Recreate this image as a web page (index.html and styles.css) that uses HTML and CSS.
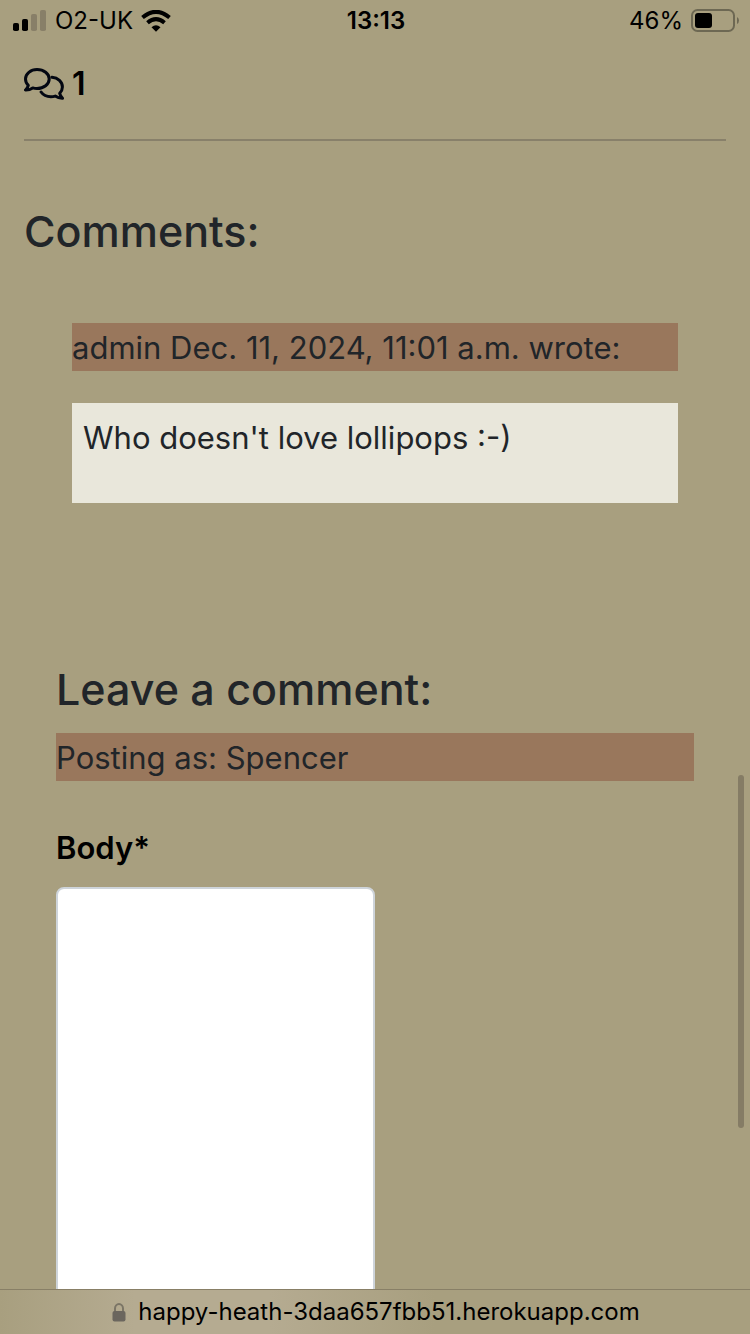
FILE: index.html
```html
<!DOCTYPE html>
<html lang="en">
<head>
<meta charset="utf-8">
<meta name="viewport" content="width=device-width, initial-scale=1">
<title>Comments</title>
<link rel="stylesheet" href="styles.css">
</head>
<body>
<header class="status">
  <div class="status-side">
    <svg class="signal" width="34" height="22" viewBox="0 0 34 22" aria-hidden="true">
      <rect x="0" y="13" width="6" height="8" rx="1.8"/>
      <rect x="9" y="9" width="6" height="12" rx="1.8"/>
      <rect class="dim" x="18" y="4" width="6" height="17" rx="1.8"/>
      <rect class="dim" x="27" y="0" width="6" height="21" rx="1.8"/>
    </svg>
    <span>O2-UK</span>
    <svg width="30" height="22" viewBox="0 0 30 22" aria-hidden="true">
      <path class="wave" d="M1.500 7.600Q15-4 28.500 7.600"/>
      <path class="wave" d="M6.500 12.700Q15 5.400 23.500 12.700"/>
      <path d="M10.500 17.200Q15 13.200 19.500 17.200L15 21.800z"/>
    </svg>
  </div>
  <time class="clock">13:13</time>
  <div class="status-side status-end">
    <span>46%</span>
    <svg width="48" height="24" viewBox="0 0 48 24" aria-hidden="true">
      <rect class="shell" x="1" y="1" width="42" height="21" rx="5.500"/>
      <rect x="4" y="4" width="17" height="15" rx="3"/>
      <path class="cap" d="M46 8q2 1.200 2 3.500t-2 3.500z"/>
    </svg>
  </div>
</header>

<main class="page">
  <div class="count">
    <svg width="40" height="32" viewBox="0 0 40 32" aria-hidden="true">
      <path d="M13 1.500C6.600 1.500 1.500 5.800 1.500 11c0 2.500 1 4.700 2.800 6.400-.4 1.800-1.400 3.300-2.800 4.600 2.800.1 5.200-.7 7.200-2.100 1.400.5 2.800.7 4.300.7 6.800 0 12.200-4.300 12.200-9.600S19.800 1.500 13 1.500z"/>
      <path d="M28 9.300c6 .4 10.400 4.600 10.400 9.700 0 2.400-1 4.600-2.700 6.300.4 1.800 1.400 3.500 2.800 5-2.900.1-5.300-.8-7.300-2.200-1.400.4-2.800.6-4.300.6-4.200 0-7.900-1.900-9.800-4.700"/>
    </svg>
    <span>1</span>
  </div>
  <hr class="rule">
  <h3 class="title">Comments:</h3>
  <article class="comment">
    <p class="band">admin Dec. 11, 2024, 11:01 a.m. wrote:</p>
    <p class="comment-text">Who doesn't love lollipops :-)</p>
  </article>
  <form class="form">
    <h3 class="title">Leave a comment:</h3>
    <p class="band">Posting as: Spencer</p>
    <label class="label" for="body">Body*</label>
    <textarea class="field" id="body" name="body"></textarea>
  </form>
  <div class="thumb"></div>
</main>

<footer class="address">
  <svg width="14" height="19" viewBox="0 0 14 19" aria-hidden="true">
    <path class="shackle" d="M3 9V5.500a4 4.500 0 0 1 8 0V9"/>
    <rect x="0.500" y="8" width="13" height="10.500" rx="2"/>
  </svg>
  <span>happy-heath-3daa657fbb51.herokuapp.com</span>
</footer>
</body>
</html>
```
FILE: styles.css
```css
* { box-sizing: border-box; }

body {
  margin: 0;
  height: 100vh;
  display: flex;
  flex-direction: column;
  overflow: hidden;
  background: #a89f7f;
  color: #212529;
  font-family: Inter, "Liberation Sans", sans-serif;
  font-size: 31px;
  line-height: 48px;
}

p, h3 { margin: 0; }

.status {
  display: grid;
  grid-template-columns: 1fr auto 1fr;
  align-items: center;
  height: 40px;
  padding: 0 11px 0 13px;
  color: #000;
  font-size: 24px;
  line-height: 42px;
}
.status-side { display: flex; align-items: center; gap: 8px; }
.status-end { justify-content: flex-end; }
.clock { font-weight: 600; }
.dim { fill: #887f68; }
.wave { fill: none; stroke: #000; stroke-width: 4; }
.shell { fill: none; stroke: #6d6853; stroke-width: 2; }
.cap { fill: #6d6853; }

.page {
  position: relative;
  flex: 1;
  min-height: 0;
  overflow: hidden;
  padding: 19px 24px 0;
}
.count {
  display: flex;
  align-items: center;
  gap: 8px;
  color: #000;
  font-size: 32px;
  font-weight: 600;
  line-height: 50px;
}
.count svg { fill: none; stroke: #030712; stroke-width: 3; stroke-linejoin: round; stroke-linecap: round; }
.rule {
  height: 2px;
  margin: 30px 0 63px;
  border: 0;
  background: #88806a;
}
.title {
  font-size: 43px;
  font-weight: 500;
  line-height: 54px;
}
.comment { padding: 65px 48px 0; }
.band {
  background: #99775c;
  line-height: 46px;
  padding-top: 2px;
}
.comment-text {
  min-height: 100px;
  margin-top: 32px;
  padding: 11px;
  background: #e9e7db;
}
.form {
  display: flex;
  flex-direction: column;
  padding: 159px 32px 0;
}
.form .band { margin-top: 17px; }
.label {
  margin: 43px 0 15px;
  color: #000;
  font-weight: 600;
}
.field {
  width: 50%;
  height: 480px;
  padding: 12px 24px;
  border: 2px solid #ced4da;
  border-radius: 8px;
  background: #fff;
  font: inherit;
  resize: none;
}
.thumb {
  position: absolute;
  top: 735px;
  right: 6px;
  width: 6px;
  height: 353px;
  border-radius: 3px;
  background: #857c65;
}

.address {
  display: flex;
  align-items: center;
  justify-content: center;
  gap: 12px;
  height: 45px;
  padding-left: 2px;
  border-top: 1px solid #887f66;
  background: linear-gradient(90deg, #a89f7f 0%, #b5ab91 18%, #b5ab91 36%, #a89f7f 58%);
  color: #000;
  font-size: 24px;
  line-height: 44px;
}
.address svg { fill: #6b665e; }
.address .shackle { fill: none; stroke: #7b7566; stroke-width: 2; }
```
